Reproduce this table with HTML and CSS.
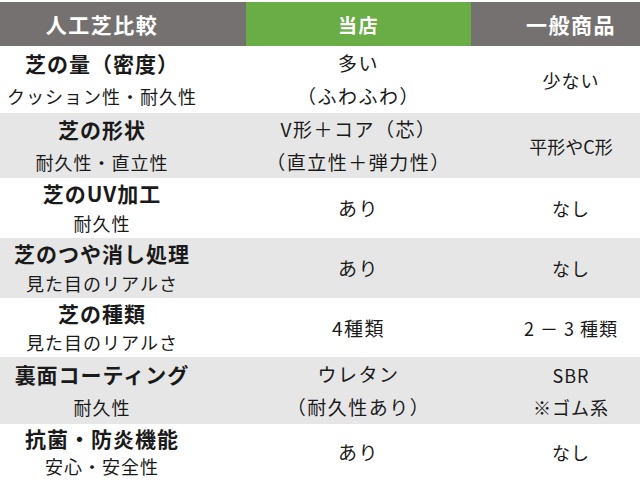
FILE: index.html
```html
<!DOCTYPE html>
<html lang="ja">
<head>
<meta charset="utf-8">
<link rel="stylesheet" href="styles.css">
</head>
<body>
<div class="table">
  <div class="hd hd-gray c1">人工芝比較</div>
  <div class="hd hd-green c2">当店</div>
  <div class="hd hd-gray c3">一般商品</div>

  <div class="cell c1"><span class="t">芝の量（密度）</span><span class="s">クッション性・耐久性</span></div>
  <div class="cell c2"><span>多い</span><span>（ふわふわ）</span></div>
  <div class="cell c3"><span>少ない</span></div>

  <div class="cell c1 g"><span class="t">芝の形状</span><span class="s">耐久性・直立性</span></div>
  <div class="cell c2 g"><span>V形＋コア（芯）</span><span>（直立性＋弾力性）</span></div>
  <div class="cell c3 g"><span class="sm">平形やC形</span></div>

  <div class="cell c1"><span class="t">芝のUV加工</span><span class="s">耐久性</span></div>
  <div class="cell c2"><span>あり</span></div>
  <div class="cell c3"><span>なし</span></div>

  <div class="cell c1 g"><span class="t">芝のつや消し処理</span><span class="s">見た目のリアルさ</span></div>
  <div class="cell c2 g"><span>あり</span></div>
  <div class="cell c3 g"><span>なし</span></div>

  <div class="cell c1"><span class="t">芝の種類</span><span class="s">見た目のリアルさ</span></div>
  <div class="cell c2"><span>4種類</span></div>
  <div class="cell c3"><span>2 － 3 種類</span></div>

  <div class="cell c1 g"><span class="t">裏面コーティング</span><span class="s">耐久性</span></div>
  <div class="cell c2 g"><span>ウレタン</span><span>（耐久性あり）</span></div>
  <div class="cell c3 g"><span>SBR</span><span>※ゴム系</span></div>

  <div class="cell c1"><span class="t">抗菌・防炎機能</span><span class="s">安心・安全性</span></div>
  <div class="cell c2"><span>あり</span></div>
  <div class="cell c3"><span>なし</span></div>
</div>
</body>
</html>
```
FILE: styles.css
```css
html, body {
  margin: 0;
  padding: 0;
  background: #ffffff;
}
body {
  width: 640px;
  height: 480px;
  overflow: hidden;
  font-family: "Noto Sans CJK JP", "Noto Sans", sans-serif;
  color: #1a1a1a;
}
.table {
  margin-top: 2px;
  display: grid;
  grid-template-columns: 246px 225px 169px;
  grid-template-rows: 44px 67px 65px 60px 60px 59px 67px 56px;
}
.hd {
  display: flex;
  align-items: center;
  justify-content: center;
  color: #ffffff;
  font-weight: 700;
  font-size: 21px;
  letter-spacing: 1.5px;
}
.hd-gray { background: #767171; }
.hd-green { background: #6aac46; }
.cell {
  display: flex;
  flex-direction: column;
  justify-content: space-around;
  align-items: center;
  line-height: 24px;
  white-space: nowrap;
}
.cell.g { background: #e7e6e6; }
.c1 { padding-right: 42px; }
.c3 { padding-left: 31px; }
.cell.c3 {
  justify-content: center;
  font-size: 18px;
  letter-spacing: 1px;
}
.cell.c3 span + span { margin-top: 8px; }
.c2 {
  font-size: 19px;
  letter-spacing: 1.5px;
}
.t {
  font-weight: 700;
  font-size: 21px;
  letter-spacing: 1px;
}
.s {
  font-size: 18px;
  letter-spacing: 1px;
}
.sm {
  font-size: 18px;
  letter-spacing: 0;
}
```
